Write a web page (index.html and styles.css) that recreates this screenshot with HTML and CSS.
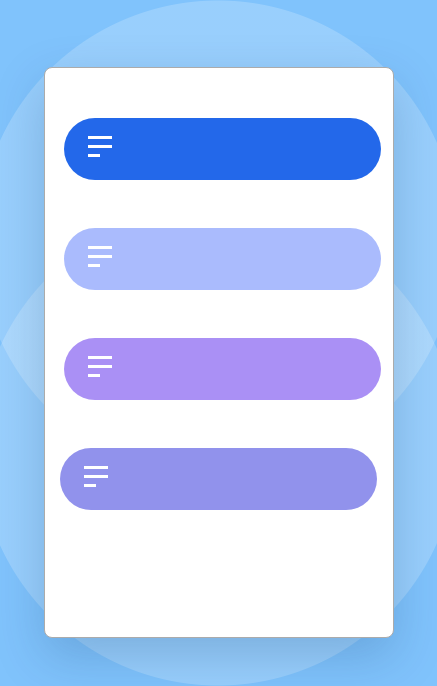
FILE: index.html
```html
<!DOCTYPE html>
<html lang="en">
<head>
<meta charset="utf-8">
<title>Menu</title>
<link rel="stylesheet" href="styles.css">
</head>
<body>
<div class="card">
  <div class="list">
    <div class="pill pill-blue"><span class="menu-icon"><i class="bar"></i><i class="bar"></i><i class="bar short"></i></span></div>
    <div class="pill pill-periwinkle"><span class="menu-icon"><i class="bar"></i><i class="bar"></i><i class="bar short"></i></span></div>
    <div class="pill pill-violet"><span class="menu-icon"><i class="bar"></i><i class="bar"></i><i class="bar short"></i></span></div>
    <div class="pill pill-indigo"><span class="menu-icon"><i class="bar"></i><i class="bar"></i><i class="bar short"></i></span></div>
  </div>
</div>
</body>
</html>
```
FILE: styles.css
```css
html, body {
  margin: 0;
  padding: 0;
}
body {
  width: 437px;
  height: 686px;
  overflow: hidden;
  font-family: "Liberation Sans", Arial, sans-serif;
  background-color: #80c3fc;
  background-image:
    radial-gradient(circle 240px at 218px 240px, rgba(255,255,255,0.2) 99.6%, rgba(255,255,255,0) 100%),
    radial-gradient(circle 240px at 218px 446px, rgba(255,255,255,0.2) 99.6%, rgba(255,255,255,0) 100%);
  background-repeat: no-repeat;
  display: flex;
  align-items: flex-start;
}
.card {
  box-sizing: border-box;
  width: 350px;
  height: 571px;
  margin: 67px 0 0 44px;
  background: #ffffff;
  border: 1px solid #ababab;
  border-radius: 8px;
  box-shadow: 0 18px 50px rgba(20, 60, 110, 0.22);
  padding: 50px 0 0 19px;
}
.list {
  display: flex;
  flex-direction: column;
  gap: 48px;
}
.pill {
  width: 317px;
  height: 62px;
  border-radius: 31px;
  display: flex;
  align-items: center;
  padding-left: 24px;
  box-sizing: border-box;
}
.pill-blue { background: #2368ea; }
.pill-periwinkle { background: #aabbfd; }
.pill-violet { background: #aa90f5; }
.pill-indigo { background: #9192ec; margin-left: -4px; }
.menu-icon {
  display: flex;
  flex-direction: column;
  gap: 6px;
  margin-top: -5px;
}
.bar {
  display: block;
  width: 24px;
  height: 3px;
  background: #ffffff;
}
.bar.short {
  width: 12px;
}
```
